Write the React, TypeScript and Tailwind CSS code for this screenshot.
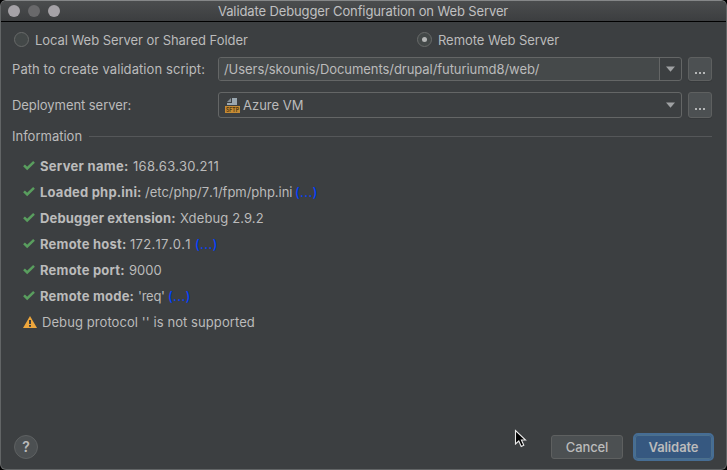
import type { ReactNode } from "react";

function Radio({ checked }: { checked?: boolean }) {
  return (
    <span className="flex size-[15px] items-center justify-center rounded-full border border-[#686a69] bg-[#434848]">
      {checked && <span className="size-[5px] rounded-full bg-[#b4b6b6]" />}
    </span>
  );
}

function Check() {
  return (
    <svg width="12" height="12" viewBox="0 0 12 12" className="shrink-0">
      <path d="M1 5.3 L4.2 8.5 L11 1.9" fill="none" stroke="#599e5e" strokeWidth="2.5" />
    </svg>
  );
}

function Warning() {
  return (
    <svg width="14" height="12" viewBox="0 0 14 12" className="shrink-0">
      <path d="M7 0 L14 12 H0 Z" fill="#eda63c" />
      <path d="M6 4 H8 V8 H6 Z M6 9 H8 V10.8 H6 Z" fill="#3c3f41" />
    </svg>
  );
}

function Arrow() {
  return (
    <svg width="9" height="6" viewBox="0 0 9 6">
      <path d="M0 0.5 H9 L4.5 5.7 Z" fill="#9fa1a3" />
    </svg>
  );
}

function Browse({ className }: { className: string }) {
  return (
    <button
      className={`flex w-6 items-end justify-center gap-[2px] rounded-[3px] border border-[#5e6060] bg-[#4c5052] shadow-[0_1px_0_#36393b] ${className}`}
      aria-label="Browse"
    >
      <span className="size-[2px] bg-[#b4b6b7]" />
      <span className="size-[2px] bg-[#b4b6b7]" />
      <span className="size-[2px] bg-[#b4b6b7]" />
    </button>
  );
}

function ServerIcon() {
  return (
    <svg width="15" height="16" viewBox="0 0 15 16" className="shrink-0 overflow-visible">
      <path d="M7 1 H12 V8 H2 V6 H7 Z" fill="#9aa7b0" />
      <path d="M2 5 L6 1 V5 Z" fill="#858f97" />
      <rect y="9" width="15" height="7" fill="#c58b35" />
      <text x="1" y="14.7" fontSize="6" fontWeight="600" textLength="13" lengthAdjust="spacingAndGlyphs" fill="#4c3510" fontFamily="Inter, sans-serif">
        SFTP
      </text>
    </svg>
  );
}

type Row = { label: string; value: string; more?: string; lt: string; vt: string };

const rows: Row[] = [
  { label: "Server name:", value: "168.63.30.211", lt: "w-[89px] tracking-[0.3px]", vt: "tracking-[0.32px]" },
  { label: "Loaded php.ini:", value: "/etc/php/7.1/fpm/php.ini", more: "ml-1", lt: "w-[101px] tracking-[0.21px]", vt: "w-[146px] tracking-[-0.03px] [font-kerning:none]" },
  { label: "Debugger extension:", value: "Xdebug 2.9.2", lt: "w-[136px] tracking-[0.15px]", vt: "tracking-[0.12px]" },
  { label: "Remote host:", value: "172.17.0.1", more: "ml-1", lt: "w-[86px] tracking-[0.22px]", vt: "w-[61px] tracking-[0.3px] [font-kerning:none]" },
  { label: "Remote port:", value: "9000", lt: "w-[85px] tracking-[0.22px]", vt: "" },
  { label: "Remote mode:", value: "'req'", more: "ml-1", lt: "w-[94px] tracking-[0.22px]", vt: "w-[26px] tracking-[-0.25px]" },
];

function InfoRow({ children }: { children: ReactNode }) {
  return <div className="flex h-[26px] items-center">{children}</div>;
}

export default function App() {
  return (
    <div className="h-[470px] w-[727px] bg-black">
      <div className="relative flex h-full flex-col overflow-hidden rounded-[6px] border border-[#626566] border-t-[#858788] bg-[#3c3f41] font-['Inter',sans-serif] text-[13px] leading-4 whitespace-nowrap text-[#bbbbbb]">
        <header className="flex h-[21px] shrink-0 items-center border-b border-black bg-linear-to-b from-[#4b4d4e] to-[#3c3e40]">
          <div className="ml-[7px] flex w-[210px] gap-2">
            <span className="size-3 rounded-full bg-[#a5a2a7]" />
            <span className="size-3 rounded-full bg-[#69696b]" />
            <span className="size-3 rounded-full bg-[#a5a2a7]" />
          </div>
          <h1 className="tracking-[-0.12px] text-[#c0c0c1]">Validate Debugger Configuration on Web Server</h1>
        </header>

        <div className="mt-[10px] flex h-[15px] items-center pl-[13px]">
          <label className="flex w-[403px] items-center gap-[6px]">
            <Radio />
            <span className="tracking-[-0.05px]">Local Web Server or Shared Folder</span>
          </label>
          <label className="flex items-center gap-[6px]">
            <Radio checked />
            <span className="tracking-[-0.06px]">Remote Web Server</span>
          </label>
        </div>

        <div className="mt-[10px] flex h-6 items-center pl-[11px]">
          <span className="w-[206px] tracking-[0.08px]">Path to create validation script:</span>
          <div className="mr-[6px] flex h-6 w-[464px] overflow-hidden rounded-[3px] border border-[#646666]">
            <div className="flex flex-1 items-center bg-[#45494a] pl-[5px] tracking-[-0.06px]">
              /Users/skounis/Documents/drupal/futuriumd8/web/
            </div>
            <div className="flex w-[22px] items-center justify-center border-l border-[#646666]">
              <Arrow />
            </div>
          </div>
          <Browse className="h-6 pb-[6px]" />
        </div>

        <div className="mt-[11px] flex h-[26px] items-center pl-[11px]">
          <span className="w-[206px] tracking-[-0.06px]">Deployment server:</span>
          <div className="mr-[6px] flex h-[26px] w-[464px] items-center rounded-[3px] border border-[#646666] pr-[6px] pl-[6px]">
            <ServerIcon />
            <span className="ml-[3px] flex-1">Azure VM</span>
            <Arrow />
          </div>
          <Browse className="h-[26px] pb-[7px]" />
        </div>

        <div className="mt-[10px] flex h-4 items-center gap-[7px] pr-[14px] pl-[11px]">
          <span>Information</span>
          <span className="h-px flex-1 bg-[#555759]" />
        </div>

        <section className="mt-[9px] pl-[22px]">
          {rows.map((r) => (
            <InfoRow key={r.label}>
              <Check />
              <span className="ml-[5px] flex">
                <b className={`mr-1 font-bold ${r.lt}`}>{r.label}</b>
                <span className={r.vt}>{r.value}</span>
                {r.more && <a className={`font-medium tracking-[0.3px] text-[#0040ff] ${r.more}`}>(...)</a>}
              </span>
            </InfoRow>
          ))}
          <InfoRow>
            <Warning />
            <span className="ml-[5px] tracking-[0.08px]">Debug protocol '' is not supported</span>
          </InfoRow>
        </section>

        <footer className="mt-auto mb-[8px] flex h-[28px] items-center pr-[12px] pl-[13px]">
          <button className="flex size-6 items-center justify-center rounded-full border border-[#5e6162] bg-[#4c5052] text-[14px] font-semibold">?</button>
          <div className="ml-auto flex items-center gap-[10px]">
            <button className="h-6 w-[72px] rounded-[3px] border border-[#5e6060] bg-[#4c5052] font-medium tracking-[-0.1px]">Cancel</button>
            <button className="h-[28px] w-[81px] rounded-[5px] border-2 border-[#466d94] bg-[#365880] p-0 font-semibold tracking-[-0.1px]">
              <span className="flex h-6 items-center justify-center rounded-[3px] border border-[#4c708c]">Validate</span>
            </button>
          </div>
        </footer>

        <svg className="absolute top-[428px] left-[513px]" width="14" height="20" viewBox="0 0 14 20">
          <path d="M1.5 1.5 V15 L4.8 12 L7.2 17.4 L9.8 16.2 L7.4 11 H11.5 Z" fill="#000" stroke="#e8e8e8" strokeWidth="1.1" />
        </svg>
      </div>
    </div>
  );
}
